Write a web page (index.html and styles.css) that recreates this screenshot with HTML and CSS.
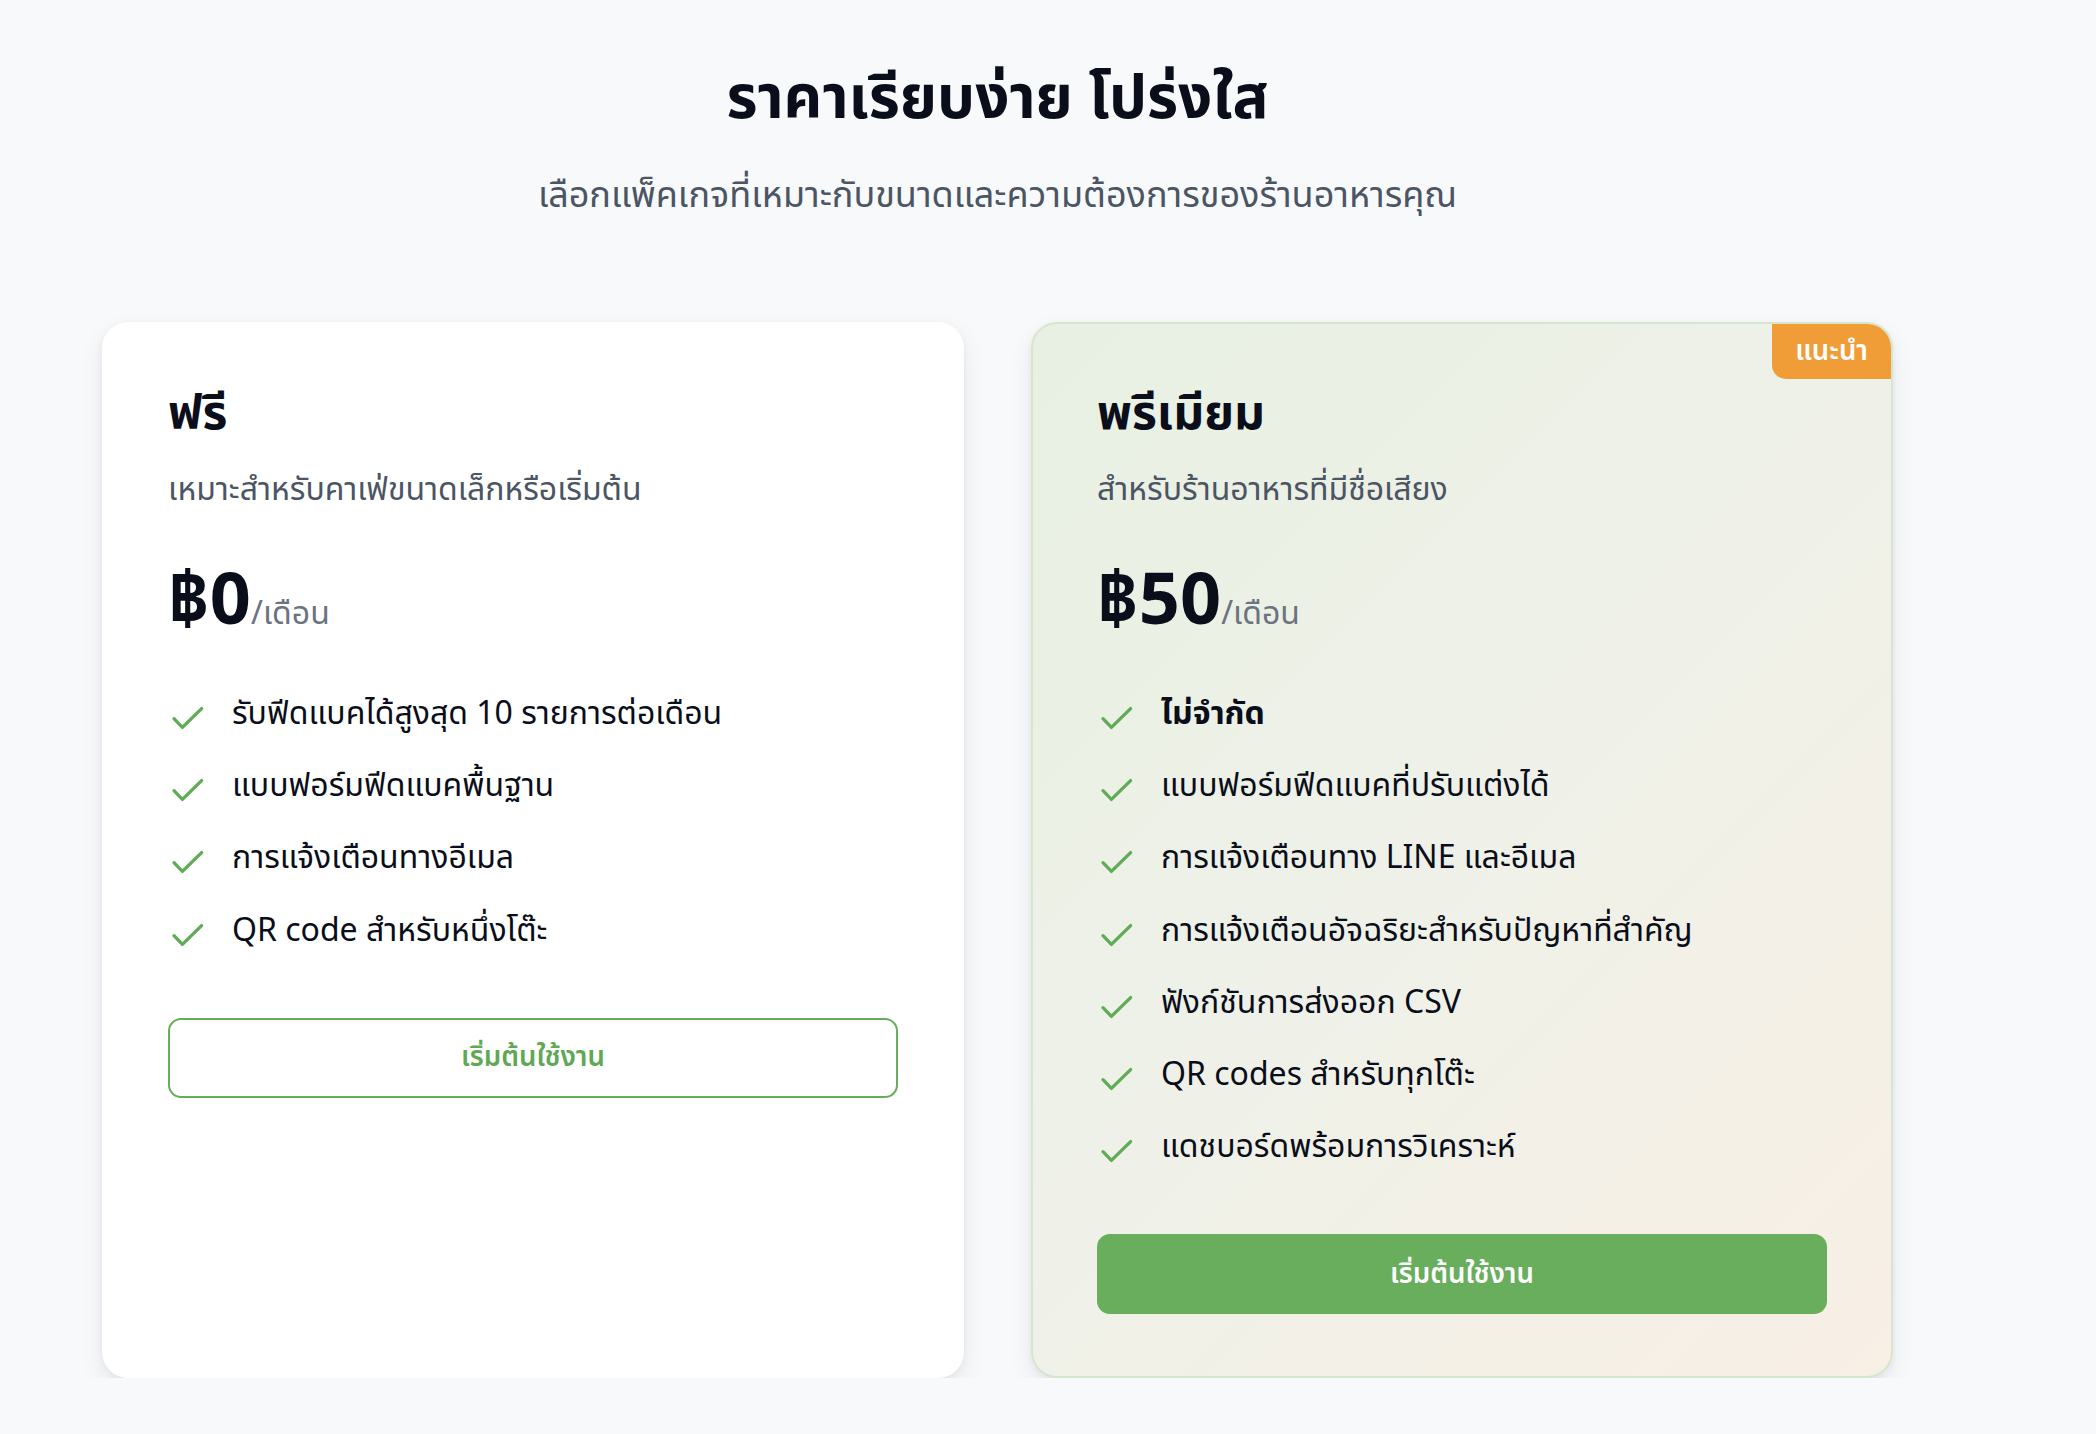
FILE: index.html
```html
<!DOCTYPE html>
<html lang="th">
<head>
<meta charset="utf-8">
<title>ราคา</title>
<link rel="stylesheet" href="styles.css">
</head>
<body>
<section class="pricing">
  <header class="pricing-head">
    <h1 class="pricing-title">ราคาเรียบง่าย โปร่งใส</h1>
    <p class="pricing-sub">เลือกแพ็คเกจที่เหมาะกับขนาดและความต้องการของร้านอาหารคุณ</p>
  </header>
  <div class="plans">
    <article class="plan">
      <h2 class="plan-name">ฟรี</h2>
      <p class="plan-desc">เหมาะสำหรับคาเฟ่ขนาดเล็กหรือเริ่มต้น</p>
      <div class="plan-price"><span class="amount">฿0</span><span class="per">/เดือน</span></div>
      <ul class="features">
        <li><svg class="check" viewBox="0 0 36 48"><polyline points="4,28.7 12.4,37.4 31.6,18.6"/></svg><span>รับฟีดแบคได้สูงสุด 10 รายการต่อเดือน</span></li>
        <li><svg class="check" viewBox="0 0 36 48"><polyline points="4,28.7 12.4,37.4 31.6,18.6"/></svg><span>แบบฟอร์มฟีดแบคพื้นฐาน</span></li>
        <li><svg class="check" viewBox="0 0 36 48"><polyline points="4,28.7 12.4,37.4 31.6,18.6"/></svg><span>การแจ้งเตือนทางอีเมล</span></li>
        <li><svg class="check" viewBox="0 0 36 48"><polyline points="4,28.7 12.4,37.4 31.6,18.6"/></svg><span>QR code สำหรับหนึ่งโต๊ะ</span></li>
      </ul>
      <a class="btn btn-outline" href="#">เริ่มต้นใช้งาน</a>
    </article>
    <article class="plan plan-featured">
      <span class="badge">แนะนำ</span>
      <h2 class="plan-name">พรีเมียม</h2>
      <p class="plan-desc">สำหรับร้านอาหารที่มีชื่อเสียง</p>
      <div class="plan-price"><span class="amount">฿50</span><span class="per">/เดือน</span></div>
      <ul class="features">
        <li><svg class="check" viewBox="0 0 36 48"><polyline points="4,28.7 12.4,37.4 31.6,18.6"/></svg><span class="strong">ไม่จำกัด</span></li>
        <li><svg class="check" viewBox="0 0 36 48"><polyline points="4,28.7 12.4,37.4 31.6,18.6"/></svg><span>แบบฟอร์มฟีดแบคที่ปรับแต่งได้</span></li>
        <li><svg class="check" viewBox="0 0 36 48"><polyline points="4,28.7 12.4,37.4 31.6,18.6"/></svg><span>การแจ้งเตือนทาง LINE และอีเมล</span></li>
        <li><svg class="check" viewBox="0 0 36 48"><polyline points="4,28.7 12.4,37.4 31.6,18.6"/></svg><span>การแจ้งเตือนอัจฉริยะสำหรับปัญหาที่สำคัญ</span></li>
        <li><svg class="check" viewBox="0 0 36 48"><polyline points="4,28.7 12.4,37.4 31.6,18.6"/></svg><span>ฟังก์ชันการส่งออก CSV</span></li>
        <li><svg class="check" viewBox="0 0 36 48"><polyline points="4,28.7 12.4,37.4 31.6,18.6"/></svg><span>QR codes สำหรับทุกโต๊ะ</span></li>
        <li><svg class="check" viewBox="0 0 36 48"><polyline points="4,28.7 12.4,37.4 31.6,18.6"/></svg><span>แดชบอร์ดพร้อมการวิเคราะห์</span></li>
      </ul>
      <a class="btn btn-solid" href="#">เริ่มต้นใช้งาน</a>
    </article>
  </div>
</section>
</body>
</html>
```

FILE: styles.css
```css
* { box-sizing: border-box; }
html, body { margin: 0; padding: 0; }
body {
  background: #f8f9fb;
  font-family: "Noto Sans Thai", "Noto Sans", sans-serif;
  color: #0b1020;
}
.pricing {
  width: 1791px;
  margin-left: 102px;
  padding-top: 56px;
}
.pricing-head { text-align: center; }
.pricing-title {
  margin: 0;
  font-size: 60px;
  line-height: 88px;
  font-weight: 700;
  color: #0a0e1a;
}
.pricing-sub {
  margin: 28px 0 0;
  font-size: 36px;
  line-height: 48px;
  color: #4b5563;
}
.plans {
  display: grid;
  grid-template-columns: 862px 862px;
  column-gap: 67px;
  margin-top: 102px;
}
.plan {
  position: relative;
  background: #ffffff;
  border-radius: 26px;
  padding: 64px 66px 64px 66px;
  box-shadow: 0 10px 24px rgba(15, 23, 42, 0.075), 0 2px 6px rgba(15, 23, 42, 0.05);
  display: flex;
  flex-direction: column;
}
.plan-featured {
  background: linear-gradient(135deg, #e8f0e3 0%, #eff1e8 50%, #f8efe5 100%);
  border: 2px solid #d5e6cd;
  padding: 62px 64px 62px 64px;
  overflow: hidden;
}
.badge {
  position: absolute;
  top: 0;
  right: 0;
  background: #f09d38;
  color: #ffffff;
  font-size: 27.5px;
  font-weight: 600;
  line-height: 55px;
  padding: 0 23px;
  border-bottom-left-radius: 14px;
}
.plan-name {
  margin: 0;
  font-size: 48px;
  line-height: 58px;
  font-weight: 700;
  color: #0a0e1a;
}
.plan-desc {
  margin: 22px 0 0;
  font-size: 32px;
  line-height: 48px;
  color: #4b5563;
}
.plan-price {
  margin-top: 48px;
  height: 80px;
  font-size: 72px;
  line-height: 80px;
  white-space: nowrap;
}
.amount {
  font-size: 72px;
  font-weight: 700;
  color: #0a0e1a;
}
.per {
  font-size: 32px;
  line-height: 1;
  color: #6b7280;
}
.features {
  list-style: none;
  margin: 48px 0 0;
  padding: 0;
  display: flex;
  flex-direction: column;
  gap: 24.2px;
}
.features li {
  display: flex;
  align-items: flex-start;
  font-size: 32px;
  line-height: 48px;
  color: #0a0e1a;
}
.check {
  width: 36px;
  height: 48px;
  flex: none;
  margin-left: 2px;
  margin-right: 26px;
  fill: none;
  stroke: #5fab56;
  stroke-width: 3.3;
  stroke-linecap: round;
  stroke-linejoin: round;
}
.strong { font-weight: 700; }
.btn {
  display: flex;
  align-items: center;
  justify-content: center;
  height: 80px;
  margin-top: 63px;
  border-radius: 13px;
  font-size: 27.5px;
  font-weight: 600;
  text-decoration: none;
}
.btn-outline {
  border: 2.67px solid #67ad5c;
  color: #5fa855;
  background: #ffffff;
}
.btn-solid {
  background: #68ae5d;
  color: #ffffff;
}
```
